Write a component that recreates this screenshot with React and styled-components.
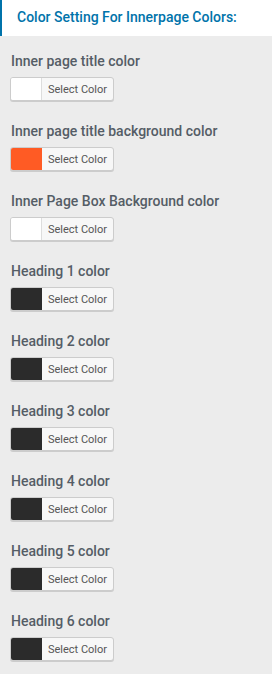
import React from 'react';
import styled, { createGlobalStyle } from 'styled-components';

const GlobalStyle = createGlobalStyle`
  body {
    margin: 0;
    background: #ececec;
    font-family: Roboto, "Noto Sans", Arial, sans-serif;
  }
`;

const Panel = styled.div`
  width: 272px;
  min-height: 674px;
  background: #ececec;
`;

const Header = styled.div`
  height: 36px;
  box-sizing: border-box;
  background: #fff;
  border-left: 2px solid #0073aa;
  padding-left: 15px;
  display: flex;
  align-items: center;
`;

const HeaderTitle = styled.h3`
  margin: 0 0 3px;
  font-size: 14px;
  font-weight: 500;
  color: #0073aa;
`;

const List = styled.div`
  padding: 15px 0 0 10px;
  display: flex;
  flex-direction: column;
  gap: 20px;
`;

const Field = styled.div`
  display: flex;
  flex-direction: column;
  align-items: flex-start;
  gap: 6px;
`;

const Label = styled.span`
  font-size: 14px;
  line-height: 20px;
  font-weight: 500;
  color: #555d66;
  padding-left: 1px;
`;

const ColorButton = styled.button`
  display: flex;
  align-items: stretch;
  height: 24px;
  width: 104px;
  padding: 0;
  border: 1px solid #ccc;
  border-radius: 3px;
  background: #f7f7f7;
  box-shadow: 0 1px 0 #ccc;
  overflow: hidden;
  cursor: pointer;
  font-family: inherit;
`;

const Swatch = styled.span`
  width: 30px;
  background: ${p => p.color};
  border-right: 1px solid ${p => (p.color === '#fff' ? '#ddd' : p.color)};
`;

const ButtonText = styled.span`
  flex: 1;
  display: flex;
  align-items: center;
  justify-content: center;
  font-size: 11px;
  color: #555;
`;

const fields = [
  { label: 'Inner page title color', color: '#fff' },
  { label: 'Inner page title background color', color: '#ff5b24' },
  { label: 'Inner Page Box Background color', color: '#fff' },
  { label: 'Heading 1 color', color: '#2b2b2b' },
  { label: 'Heading 2 color', color: '#2b2b2b' },
  { label: 'Heading 3 color', color: '#2b2b2b' },
  { label: 'Heading 4 color', color: '#2b2b2b' },
  { label: 'Heading 5 color', color: '#2b2b2b' },
  { label: 'Heading 6 color', color: '#2b2b2b' },
];

const App = () => {
  return (
    <Panel>
      <GlobalStyle />
      <Header>
        <HeaderTitle>Color Setting For Innerpage Colors:</HeaderTitle>
      </Header>
      <List>
        {fields.map(f => (
          <Field key={f.label}>
            <Label>{f.label}</Label>
            <ColorButton>
              <Swatch color={f.color} />
              <ButtonText>Select Color</ButtonText>
            </ColorButton>
          </Field>
        ))}
      </List>
    </Panel>
  );
};

export default App;
